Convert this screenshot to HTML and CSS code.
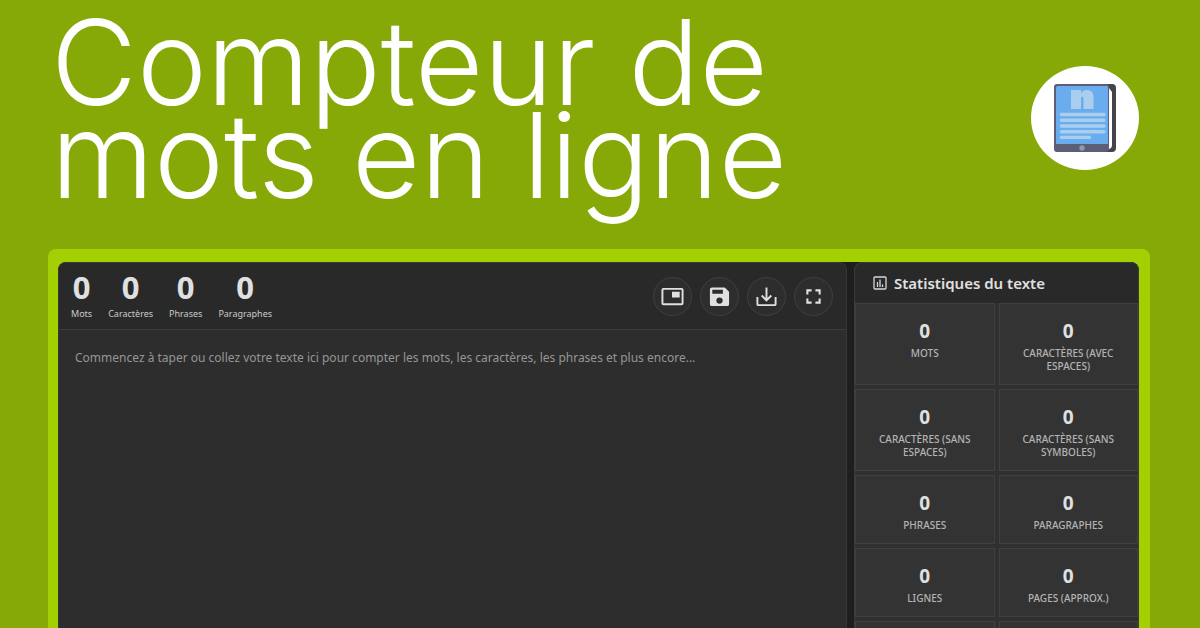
FILE: index.html
```html
<!DOCTYPE html>
<html lang="fr">
<head>
<meta charset="utf-8">
<title>Compteur de mots en ligne</title>
<link rel="stylesheet" href="styles.css">
</head>
<body>
<header class="hero">
  <h1 class="title">Compteur de<br>mots en ligne</h1>
  <svg class="logo" viewBox="0 0 108 104" role="img" aria-label="Carnet">
    <ellipse cx="54" cy="52" rx="54" ry="52" fill="#fff"/>
    <rect x="28" y="18" width="57" height="68" rx="4" fill="#444449"/>
    <path d="M78 22l3 4v53q0 3-3 4z" fill="#fff"/>
    <rect x="23" y="18" width="55" height="68" rx="3" fill="#5c5e75"/>
    <path d="M27 20h49q1 0 1 1v57H25V22q0-2 2-2z" fill="#69adef"/>
    <path d="M40 24h10v3q2-3 6-3 6.500 0 6.500 7v12H52.500V32q0-1.500-1.200-1.500T50 32v11H40z" fill="#aacfee"/>
    <g stroke="#aacfee" stroke-width="3.400" stroke-linecap="round">
      <path d="M30.500 48.500h42.500M30.500 54.200h42.500M30.500 60h42.500M30.500 65.700h42.500M30.500 71.400h28"/>
    </g>
    <circle cx="51" cy="82" r="2.700" fill="#8c9bb0"/>
  </svg>
</header>
<main class="frame">
  <div class="app">
    <section class="editor">
      <div class="toolbar">
        <dl class="counts">
          <div class="count"><dt>Mots</dt><dd>0</dd></div>
          <div class="count"><dt>Caractères</dt><dd>0</dd></div>
          <div class="count"><dt>Phrases</dt><dd>0</dd></div>
          <div class="count"><dt>Paragraphes</dt><dd>0</dd></div>
        </dl>
        <div class="actions">
          <button class="round" type="button" aria-label="Mini-fenêtre"><svg viewBox="0 0 24 24"><path fill-rule="evenodd" d="M2.500 3h19a2 2 0 0 1 2 2v14a2 2 0 0 1-2 2h-19a2 2 0 0 1-2-2V5a2 2 0 0 1 2-2zm0 2v14h19V5zM11.500 7h8v6h-8z"/></svg></button>
          <button class="round" type="button" aria-label="Enregistrer"><svg viewBox="0 0 24 24"><path fill-rule="evenodd" d="M4 2.500h13.500l4.500 4.500V20a2 2 0 0 1-2 2H4a2 2 0 0 1-2-2V4.500a2 2 0 0 1 2-2zM4.500 5v4H15.500V5zM12 13a3.300 3.300 0 1 0 0 6.600 3.300 3.300 0 0 0 0-6.600z"/></svg></button>
          <button class="round" type="button" aria-label="Télécharger"><svg viewBox="0 0 24 24"><path class="line" d="M12 2.500v13M7 11l5 5 5-5M2.500 12.500V20q0 1 1 1h17q1 0 1-1v-7.500"/></svg></button>
          <button class="round" type="button" aria-label="Plein écran"><svg viewBox="0 0 24 24"><path d="M4.500 4.500H10V6.700H6.700V10H4.500zM14 4.500h5.500V10H17.300V6.700H14zM4.500 14H6.700v3.300H10v2.200H4.500zM17.300 14h2.200v5.500H14v-2.200h3.300z"/></svg></button>
        </div>
      </div>
      <textarea class="input" aria-label="Votre texte" placeholder="Commencez à taper ou collez votre texte ici pour compter les mots, les caractères, les phrases et plus encore..."></textarea>
    </section>
    <aside class="stats">
      <h2 class="stats-title"><svg viewBox="0 0 14 14" stroke-width="1.300"><rect x="1" y="1" width="12" height="12" rx="1"/><path d="M4.500 6v5M7 3.500V11M9.500 8.500V11"/></svg>Statistiques du texte</h2>
      <dl class="grid">
        <div class="cell"><dt>Mots</dt><dd>0</dd></div>
        <div class="cell"><dt>Caractères (avec espaces)</dt><dd>0</dd></div>
        <div class="cell"><dt>Caractères (sans espaces)</dt><dd>0</dd></div>
        <div class="cell"><dt>Caractères (sans symboles)</dt><dd>0</dd></div>
        <div class="cell"><dt>Phrases</dt><dd>0</dd></div>
        <div class="cell"><dt>Paragraphes</dt><dd>0</dd></div>
        <div class="cell"><dt>Lignes</dt><dd>0</dd></div>
        <div class="cell"><dt>Pages (approx.)</dt><dd>0</dd></div>
        <div class="cell"></div>
        <div class="cell"></div>
      </dl>
    </aside>
  </div>
</main>
</body>
</html>
```
FILE: styles.css
```css
* { box-sizing: border-box; }
html, body { height: 100%; }
body {
  margin: 0;
  display: flex;
  flex-direction: column;
  overflow: hidden;
  background: #86a908;
  color: #e0e0e0;
  font-family: "Noto Sans", "Open Sans", sans-serif;
}
dl, dd { margin: 0; }

.hero {
  display: flex;
  flex: none;
  justify-content: space-between;
  align-items: flex-start;
  padding: 16px 61px 47px 51px;
}
.title {
  margin: 0;
  color: #fff;
  font: 300 118px/93px Inter, Lato, sans-serif;
  white-space: nowrap;
}
.logo { width: 108px; height: 104px; margin-top: 50px; }

.frame {
  flex: 1;
  min-height: 0;
  margin: 0 50px 0 48px;
  padding: 13px 11px 0 10px;
  border-radius: 8px 8px 0 0;
  background: #a3cf03;
}
.app {
  display: grid;
  grid-template-columns: 1fr 285px;
  gap: 7px;
  height: 100%;
  overflow: hidden;
  border-radius: 8px 8px 0 0;
  background: #1e1e1e;
}
.editor {
  display: flex;
  flex-direction: column;
  border: 1px solid #383838;
  border-bottom: 0;
  border-radius: 8px 8px 0 0;
  background: #2d2d2d;
  overflow: hidden;
}
.toolbar {
  display: flex;
  justify-content: space-between;
  align-items: center;
  height: 67px;
  padding: 0 13px 0 12px;
  border-bottom: 1px solid #3c3c3c;
  background: #292929;
}
.counts { display: flex; gap: 16px; padding-bottom: 3px; }
.count {
  display: flex;
  flex-direction: column-reverse;
  align-items: center;
}
.count dt { color: #cacaca; font-size: 9px; line-height: 16px; }
.count dd { font-size: 31px; font-weight: 700; line-height: 38px; }
.actions { display: flex; gap: 8px; }
.round {
  display: grid;
  place-items: center;
  width: 39px;
  height: 39px;
  padding: 0;
  border: 1px solid #404040;
  border-radius: 50%;
  background: #2d2d2d;
}
.round svg { width: 23px; height: 23px; fill: #e0e0e0; }
.round .line { fill: none; stroke: #e0e0e0; stroke-width: 2; }
.input {
  flex: 1;
  width: 100%;
  padding: 18px 16px;
  border: 0;
  outline: 0;
  resize: none;
  background: #2d2d2d;
  color: #e0e0e0;
  font: 12px/20px "Noto Sans", "Open Sans", sans-serif;
}
.input::placeholder { color: #969696; }

.stats {
  border: 1px solid #3a3a3a;
  border-bottom: 0;
  border-radius: 8px 8px 0 0;
  background: #303030;
  overflow: hidden;
}
.stats-title {
  display: flex;
  align-items: center;
  gap: 7px;
  height: 40px;
  margin: 0;
  padding: 0 18px;
  background: #292929;
  font-size: 15px;
  font-weight: 600;
}
.stats-title svg { width: 14px; height: 14px; fill: none; stroke: #d8d8d8; }
.grid {
  display: grid;
  grid-template-columns: 1fr 1fr;
  gap: 4px;
}
.cell {
  display: flex;
  flex-direction: column-reverse;
  justify-content: flex-end;
  min-height: 69px;
  padding: 14px 12px 11px;
  border: 1px solid #404040;
  background: #333;
  text-align: center;
}
.cell dt {
  color: #b4b4b4;
  font-size: 10px;
  font-weight: 500;
  line-height: 13px;
  text-transform: uppercase;
}
.cell dd { margin-bottom: 3px; font-size: 19px; font-weight: 700; line-height: 26px; }
```
